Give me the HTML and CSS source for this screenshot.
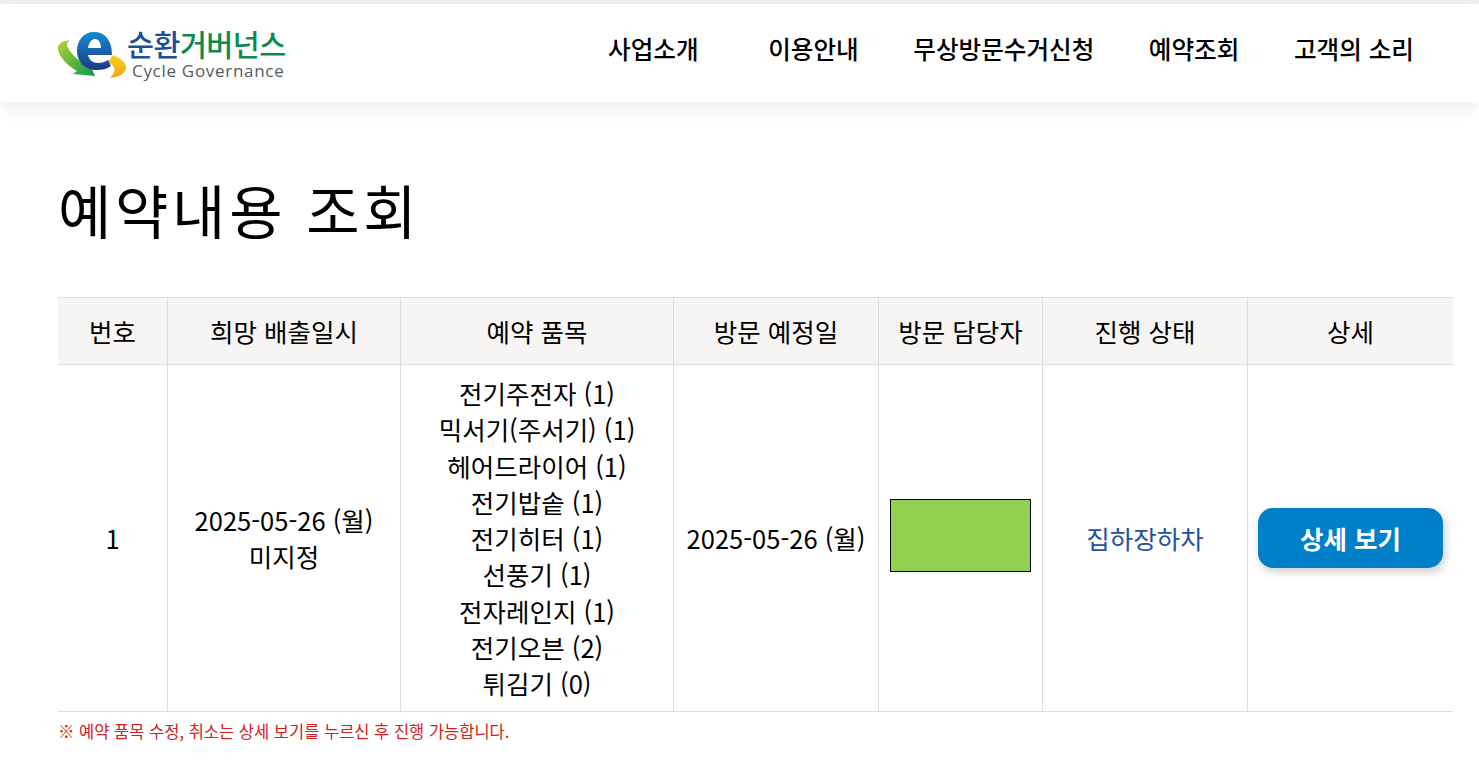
FILE: index.html
```html
<!DOCTYPE html>
<html lang="ko">
<head>
<meta charset="utf-8">
<title>예약내용 조회</title>
<link rel="stylesheet" href="styles.css">
</head>
<body>
<header class="site-header">
  <a class="logo" href="#">
    <svg class="logo-mark" viewBox="0 0 70 50" width="70" height="50" aria-hidden="true">
      <defs>
        <linearGradient id="gE" x1="0" y1="0" x2="0" y2="1"><stop offset="0" stop-color="#0f8ccb"/><stop offset=".55" stop-color="#1a5fa8"/><stop offset="1" stop-color="#1b3a86"/></linearGradient>
        <linearGradient id="gG" x1="0" y1="0" x2="1" y2="1"><stop offset="0" stop-color="#b9d52f"/><stop offset=".6" stop-color="#4fae3f"/><stop offset="1" stop-color="#12994f"/></linearGradient>
        <linearGradient id="gY" x1="0" y1="0" x2="0" y2="1"><stop offset="0" stop-color="#f7d21e"/><stop offset="1" stop-color="#f3a41c"/></linearGradient>
      </defs>
      <path fill="url(#gG)" d="M12 10 C4 11 -1 14 0 20 C2 28 10 36 19 41 L15 44 L37 46 L29 27 L25 33 C17 28 10 20 9 15 C9 13 10 11 12 10 Z"/>
      <path fill="url(#gY)" d="M55 25 L50 32 C56 35 60 40 52 48 C62 47 68 43 68 37 C68 32 62 28 55 25 Z"/>
      <path fill="url(#gE)" fill-rule="evenodd" d="M36 2 C47 2 54 10 54 25 L30 25 C31 30 35 33 40 33 C44 33 47 32 50 30 L53 36 C49 39 44 40 38 40 C27 40 19 32 19 21 C19 10 26 2 36 2 Z M30 18 L43 18 C43 12 40 9 37 9 C33 9 31 13 30 18 Z"/>
    </svg>
    <span class="logo-text">
      <span class="logo-ko"><span class="logo-blue">순환</span><span class="logo-green">거버넌스</span></span>
      <span class="logo-en">Cycle Governance</span>
    </span>
  </a>
  <nav class="main-nav">
    <a class="nav-item nav-first" href="#">사업소개</a>
    <a class="nav-item" href="#">이용안내</a>
    <a class="nav-item" href="#">무상방문수거신청</a>
    <a class="nav-item" href="#">예약조회</a>
    <a class="nav-item" href="#">고객의 소리</a>
  </nav>
</header>
<main class="content">
  <h1 class="page-title">예약내용 조회</h1>
  <table class="res-table">
    <colgroup>
      <col class="c1"><col class="c2"><col class="c3"><col class="c4"><col class="c5"><col class="c6"><col class="c7">
    </colgroup>
    <thead>
      <tr>
        <th>번호</th><th>희망 배출일시</th><th>예약 품목</th><th>방문 예정일</th><th>방문 담당자</th><th>진행 상태</th><th>상세</th>
      </tr>
    </thead>
    <tbody>
      <tr>
        <td>1</td>
        <td>2025-05-26 (월)<br>미지정</td>
        <td>전기주전자 (1)<br>믹서기(주서기) (1)<br>헤어드라이어 (1)<br>전기밥솥 (1)<br>전기히터 (1)<br>선풍기 (1)<br>전자레인지 (1)<br>전기오븐 (2)<br>튀김기 (0)</td>
        <td>2025-05-26 (월)</td>
        <td><div class="redact"></div></td>
        <td class="status">집하장하차</td>
        <td><button class="detail-btn" type="button">상세 보기</button></td>
      </tr>
    </tbody>
  </table>
  <p class="note">※ 예약 품목 수정, 취소는 상세 보기를 누르신 후 진행 가능합니다.</p>
</main>
</body>
</html>
```
FILE: styles.css
```css
* { box-sizing: border-box; }
html, body { margin: 0; padding: 0; }
body {
  background: #fff;
  color: #000;
  font-family: "Noto Sans CJK KR", "Noto Sans", sans-serif;
  padding-top: 4px;
  overflow: hidden;
  height: 769px;
}
body::before {
  content: "";
  display: block;
  height: 4px;
  margin-top: -4px;
  background: #f3f3f3;
}
.site-header {
  height: 98px;
  display: flex;
  align-items: center;
  justify-content: space-between;
  padding: 0 65px 0 58px;
  background: #fff;
  box-shadow: 0 4px 18px rgba(0,0,0,.09);
}
.logo { display: flex; align-items: center; text-decoration: none; margin-top: 4px; }
.logo-mark { display: block; width: 70px; height: 50px; }
.logo-text { display: flex; flex-direction: column; margin-left: -1px; margin-top: -4px; }
.logo-ko { font-size: 29.3px; font-weight: 500; line-height: 36px; letter-spacing: -.5px; white-space: nowrap; display: flex; }
.logo-blue { color: #1d4f96; }
.logo-green { color: #0b8a4c; }
.logo-en { font-family: "Open Sans", sans-serif; font-size: 17px; line-height: 20px; color: #555b61; letter-spacing: .7px; padding-left: 5px; white-space: nowrap; }
.main-nav { display: flex; gap: 54.6px; margin-bottom: 10px; }
.nav-item { font-size: 24.6px; font-weight: 500; color: #000; text-decoration: none; white-space: nowrap; line-height: 36px; }
.nav-first { margin-right: 15px; }
.content { padding: 0 26px 0 58px; }
.page-title { margin: 62px 0 43px; font-size: 58px; font-weight: 400; line-height: 90px; letter-spacing: 3.7px; white-space: nowrap; }
.res-table { width: 1395px; table-layout: fixed; border-collapse: collapse; font-size: 25.5px; line-height: 36.3px; }
.c1 { width: 109.5px; } .c2 { width: 233px; } .c3 { width: 273px; } .c4 { width: 205px; } .c5 { width: 164px; } .c6 { width: 205px; } .c7 { width: 205.5px; }
.res-table th, .res-table td { border: 1px solid #ddd; text-align: center; vertical-align: middle; }
.res-table th { background: #f6f5f3; font-weight: 400; height: 67px; padding: 0; }
.res-table td { height: 346px; padding: 10px 10px 9px; }
.res-table th:first-child, .res-table td:first-child { border-left: 0; }
.res-table th:last-child, .res-table td:last-child { border-right: 0; }
.redact { width: 141px; height: 73px; margin: 0 auto 6px; background: #92d050; border: 1px solid #000; }
.status { color: #1f52a3; }
.detail-btn {
  display: block; width: 185px; height: 60px; margin: 0 auto;
  border: 0; border-radius: 15px; background: #0080c9; color: #fff;
  font: 700 25.5px "Noto Sans CJK KR", sans-serif;
  padding: 0 0 2px;
  box-shadow: 2px 4px 10px rgba(0,0,0,.2);
}
.note { margin: 7px 0 0; color: #d42020; font-size: 16.5px; line-height: 24px; white-space: nowrap; }
```
